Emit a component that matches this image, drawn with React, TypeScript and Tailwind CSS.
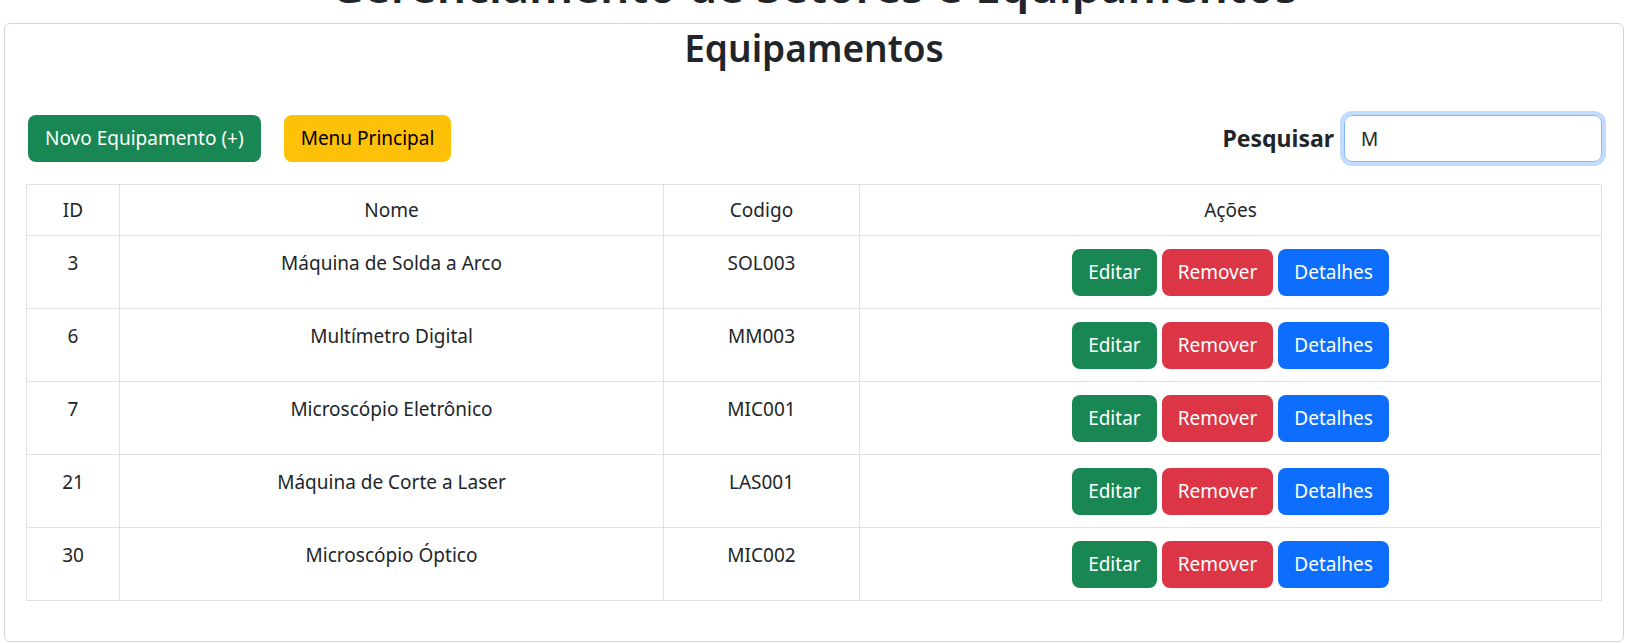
import React from 'react';

const equipamentos = [
  { id: 3, nome: 'Máquina de Solda a Arco', codigo: 'SOL003' },
  { id: 6, nome: 'Multímetro Digital', codigo: 'MM003' },
  { id: 7, nome: 'Microscópio Eletrônico', codigo: 'MIC001' },
  { id: 21, nome: 'Máquina de Corte a Laser', codigo: 'LAS001' },
  { id: 30, nome: 'Microscópio Óptico', codigo: 'MIC002' },
];

const cell = 'border border-[#dee2e6] px-2 text-center align-top';
const btn = 'h-[47px] rounded-lg px-4 text-[19px] leading-none text-white';

export default function App() {
  return (
    <div className="min-h-screen bg-white pl-1 pr-6 font-['Noto_Sans',sans-serif] text-[#212529]">
      <h1 className="-mt-[38px] mb-[15px] text-center text-[46px] leading-none font-semibold">
        Gerenciamento de Setores e Equipamentos
      </h1>

      {/* Card */}
      <div className="rounded-md border border-[#d4d4d4] px-[21px] pb-10">
        <h2 className="mb-[43px] text-center text-[37px] leading-[48px] font-semibold">Equipamentos</h2>

        {/* Toolbar */}
        <div className="flex items-center justify-between">
          <div className="ml-[2px] flex gap-[23px]">
            <button className="h-[47px] rounded-lg bg-[#198754] px-[17px] text-[19px] text-white">Novo Equipamento (+)</button>
            <button className="h-[47px] rounded-lg bg-[#ffc107] px-[17px] text-[19px] text-black">Menu Principal</button>
          </div>
          <div className="flex items-center gap-[10px]">
            <label className="text-[23px] font-bold">Pesquisar</label>
            <input
              value="M"
              readOnly
              className="h-[47px] w-[258px] rounded-lg border border-[#86b7fe] px-4 text-[19px] text-[#212529] shadow-[0_0_0_4px_rgba(13,110,253,0.25)] outline-none"
            />
          </div>
        </div>

        {/* Tabela */}
        <table className="mt-[22px] w-full table-fixed border-collapse border border-[#dee2e6] text-[19px] leading-[30px]">
          <colgroup>
            <col className="w-[93px]" />
            <col className="w-[544px]" />
            <col className="w-[196px]" />
            <col />
          </colgroup>
          <thead>
            <tr>
              <th className={`${cell} py-2.5 font-normal`}>ID</th>
              <th className={`${cell} py-2.5 font-normal`}>Nome</th>
              <th className={`${cell} py-2.5 font-normal`}>Codigo</th>
              <th className={`${cell} py-2.5 font-normal`}>Ações</th>
            </tr>
          </thead>
          <tbody>
            {equipamentos.map((eq) => (
              <tr key={eq.id}>
                <td className={`${cell} py-3`}>{eq.id}</td>
                <td className={`${cell} py-3`}>{eq.nome}</td>
                <td className={`${cell} py-3`}>{eq.codigo}</td>
                <td className={`${cell} py-3`}>
                  <div className="mt-px flex justify-center gap-[5px]">
                    <button className={`${btn} bg-[#198754]`}>Editar</button>
                    <button className={`${btn} bg-[#dc3545]`}>Remover</button>
                    <button className={`${btn} bg-[#0d6efd]`}>Detalhes</button>
                  </div>
                </td>
              </tr>
            ))}
          </tbody>
        </table>
      </div>
    </div>
  );
}
